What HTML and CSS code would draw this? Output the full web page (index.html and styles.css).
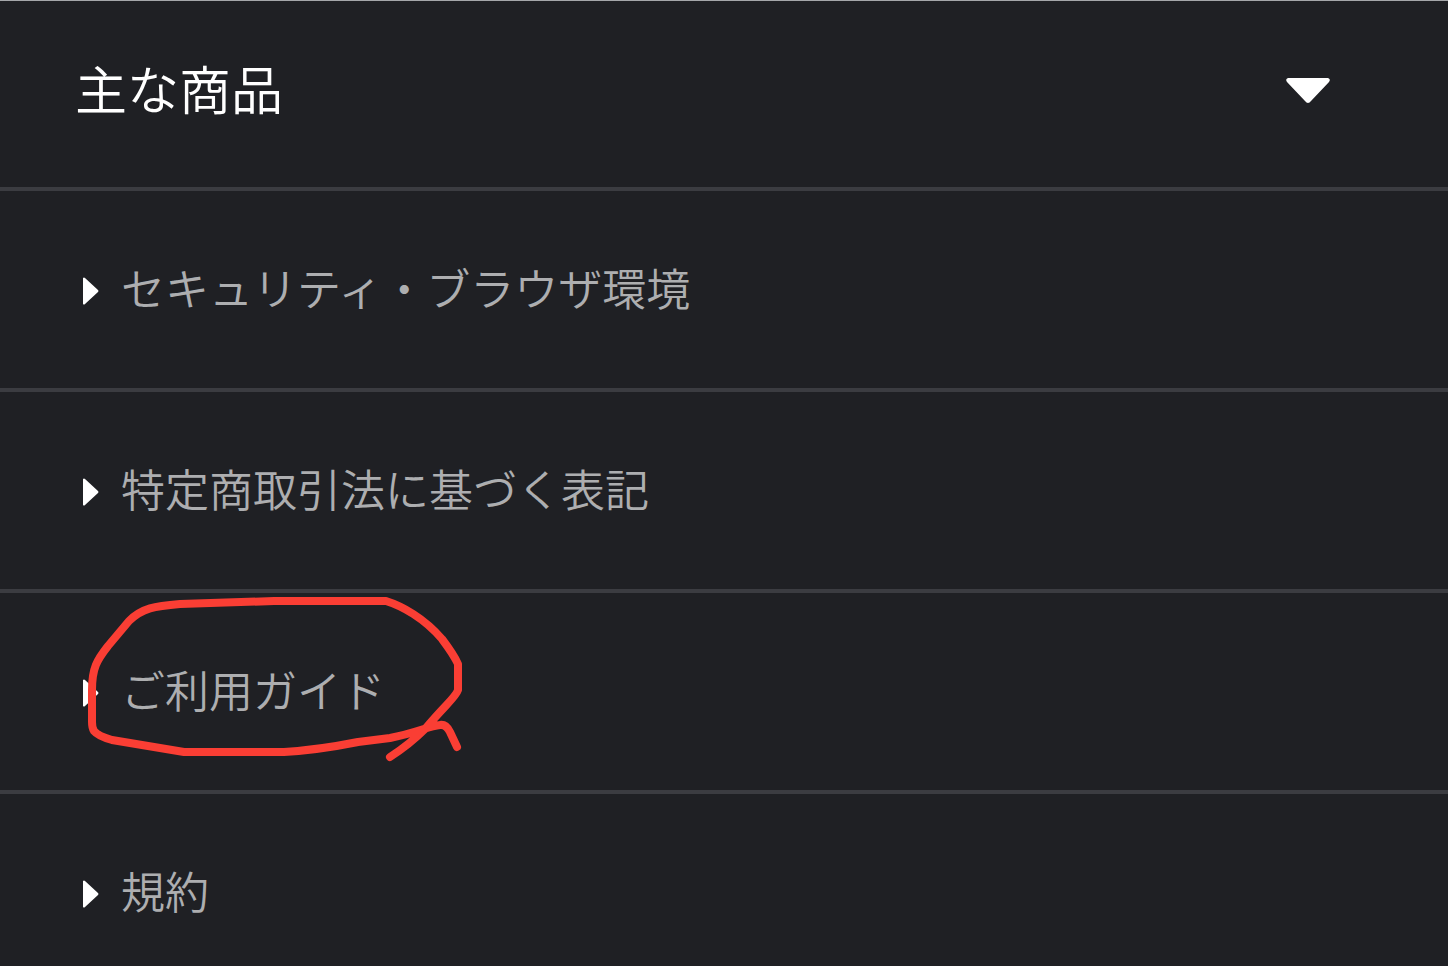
FILE: index.html
```html
<!DOCTYPE html>
<html lang="ja">
<head>
    <meta charset="UTF-8">
    <meta name="viewport" content="width=device-width, initial-scale=1.0">
    <title>主な商品</title>
    <link rel="stylesheet" href="styles.css">
</head>
<body>
    <nav class="menu">
        <button class="menu-header" type="button">
            <span>主な商品</span>
            <svg class="caret" viewBox="0 0 46 28" aria-hidden="true">
                <path d="M3 1H43Q46 2 44 5L26 24Q23 28 20 24L2 5Q0 2 3 1Z"/>
            </svg>
        </button>
        <ul class="menu-list">
            <li><a href="#"><svg class="arrow" viewBox="0 0 16 28" aria-hidden="true"><path d="M0 1Q1 0 2 1L15 13Q16 14 15 15L2 27Q1 28 0 27Z"/></svg>セキュリティ・ブラウザ環境</a></li>
            <li><a href="#"><svg class="arrow" viewBox="0 0 16 28" aria-hidden="true"><path d="M0 1Q1 0 2 1L15 13Q16 14 15 15L2 27Q1 28 0 27Z"/></svg>特定商取引法に基づく表記</a></li>
            <li>
                <a href="#"><svg class="arrow" viewBox="0 0 16 28" aria-hidden="true"><path d="M0 1Q1 0 2 1L15 13Q16 14 15 15L2 27Q1 28 0 27Z"/></svg>ご利用ガイド</a>
                <svg class="marker" viewBox="80 593 390 180" aria-hidden="true">
                    <path d="M457 747L450 732Q446 724 440 725C429 726 416 733 390 738L358 742Q318 750 284 752H184L160 748L112 740Q98 736 94 731Q92 728 92 722V690C92 668 97 660 108 646L129 621C142 608 155 606 180 604L274 601H386C402 606 424 618 442 639Q454 655 458 664V690C456 697 446 704 425 729Q410 744 390 757"/>
                </svg>
            </li>
            <li><a href="#"><svg class="arrow" viewBox="0 0 16 28" aria-hidden="true"><path d="M0 1Q1 0 2 1L15 13Q16 14 15 15L2 27Q1 28 0 27Z"/></svg>規約</a></li>
        </ul>
    </nav>
</body>
</html>
```
FILE: styles.css
```css
* {
    box-sizing: border-box;
}

body {
    margin: 0;
    background-color: #1f2024;
    font-family: "Noto Sans CJK JP", sans-serif;
    font-weight: 350;
    overflow-x: hidden;
}

/* the list runs past the fold, keep the scrollbar out of sight */
html {
    scrollbar-width: none;
}

.menu {
    border-top: 1px solid #a5a7aa;
}

.menu-header {
    display: flex;
    align-items: center;
    justify-content: space-between;
    width: 100%;
    padding: 48px 117px 60px 75px;
    border: none;
    background: none;
    color: #fff;
    font: inherit;
    font-size: 52px;
    line-height: 78px;
    cursor: pointer;
}

.caret {
    width: 46px;
    height: 28px;
    margin-top: 6px;
    fill: #fff;
}

.menu-list {
    margin: 0;
    padding: 0;
    list-style: none;
}

.menu-list li {
    position: relative;
    border-top: 4px solid #3b3c41;
}

.menu-list a {
    display: flex;
    align-items: center;
    gap: 22px;
    padding: 64px 83px 68px;
    color: #adaeb0;
    font-size: 44px;
    line-height: 65px;
    text-decoration: none;
}

.arrow {
    width: 16px;
    height: 28px;
    margin-top: 6px;
    fill: #fff;
}

/* hand-drawn ring around the guide link */
.marker {
    position: absolute;
    top: 0;
    left: 80px;
    width: 390px;
    height: 180px;
    fill: none;
    stroke: #fa3e34;
    stroke-width: 8;
    stroke-linecap: round;
    stroke-linejoin: round;
    pointer-events: none;
}
```
